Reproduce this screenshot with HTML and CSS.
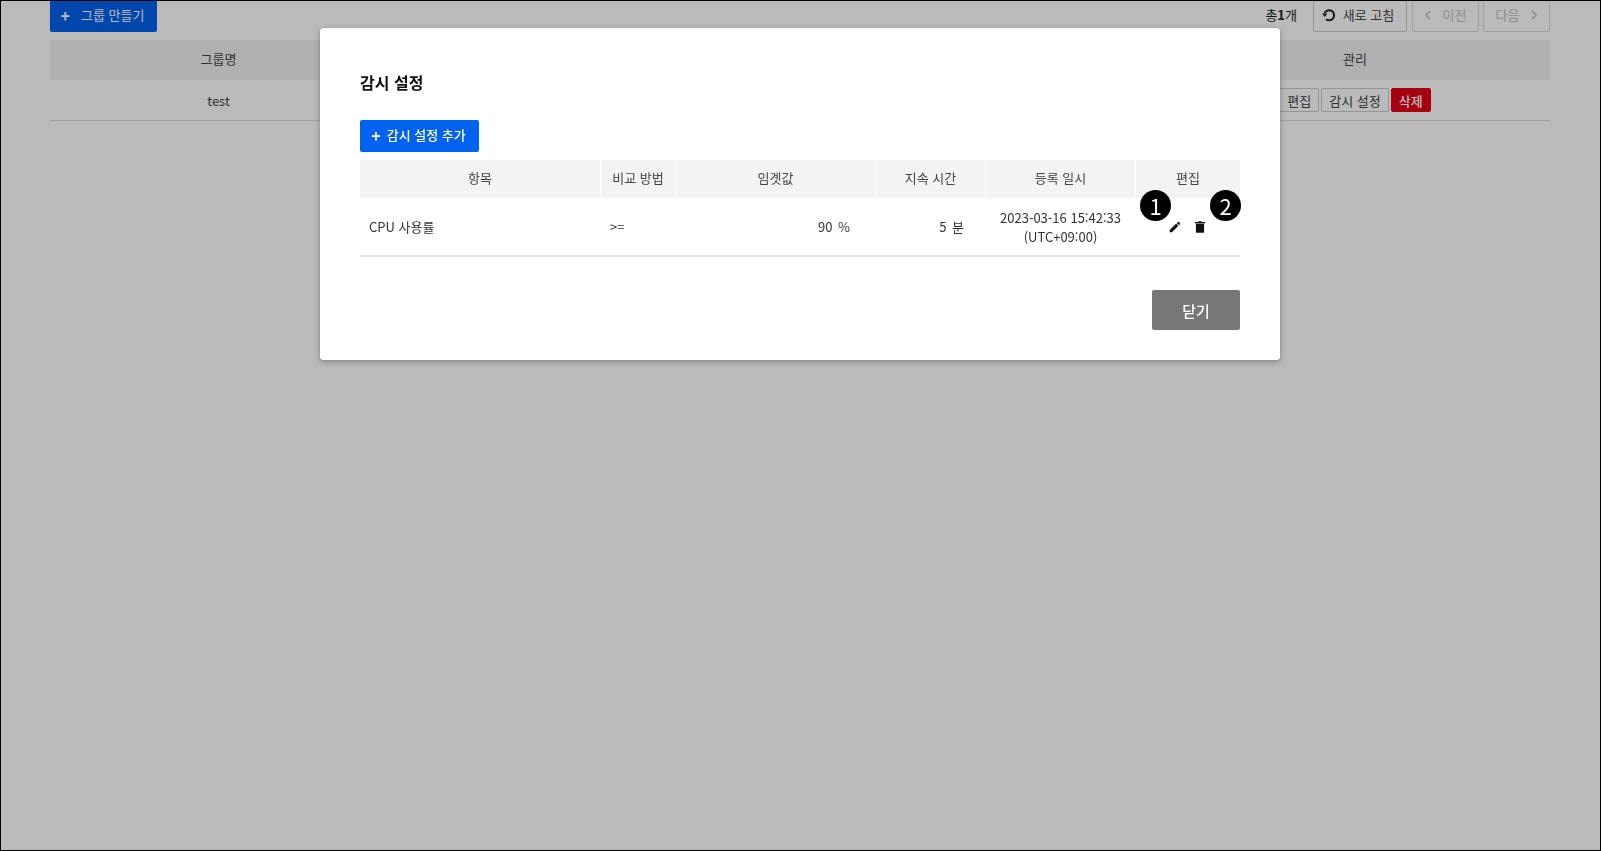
FILE: index.html
```html
<!DOCTYPE html>
<html lang="ko">
<head>
    <meta charset="UTF-8">
    <meta name="viewport" content="width=device-width, initial-scale=1.0">
    <title>감시 설정</title>
    <link rel="stylesheet" href="styles.css">
</head>
<body>

    <!-- Group list behind the dialog -->
    <main class="page">
        <div class="toolbar">
            <button class="btn btn-primary btn-create"><span class="plus">+</span>그룹 만들기</button>
            <div class="toolbar-right">
                <span class="count">총<b>1</b>개</span>
                <button class="btn btn-line btn-refresh">
                    <svg width="14" height="14" viewBox="0 0 14 14" class="refresh-icon"><path d="M2.6 5.2A5 5 0 1 1 4 11.2" fill="none" stroke="currentColor" stroke-width="2"/><path d="M0 5.4h5.4L2.7 9z" fill="currentColor"/></svg>
                    새로 고침
                </button>
                <button class="btn btn-line btn-page is-disabled">
                    <svg width="6" height="10" viewBox="0 0 6 10" class="chev"><path d="M5 1L1 5l4 4" fill="none" stroke="currentColor" stroke-width="1.6"/></svg>
                    이전
                </button>
                <button class="btn btn-line btn-page is-disabled">
                    다음
                    <svg width="6" height="10" viewBox="0 0 6 10" class="chev"><path d="M1 1l4 4-4 4" fill="none" stroke="currentColor" stroke-width="1.6"/></svg>
                </button>
            </div>
        </div>
        <div class="group-table">
            <div class="group-head">
                <div class="group-name">그룹명</div>
                <div class="group-rest"></div>
                <div class="group-manage">관리</div>
            </div>
            <div class="group-row">
                <div class="group-name">test</div>
                <div class="group-rest"></div>
                <div class="group-manage group-actions">
                    <button class="btn-small">편집</button>
                    <button class="btn-small">감시 설정</button>
                    <button class="btn-small btn-danger">삭제</button>
                </div>
            </div>
        </div>
    </main>

    <!-- Dialog -->
    <div class="overlay">
        <section class="modal">
            <h2 class="modal-title">감시 설정</h2>
            <button class="btn btn-primary btn-add"><span class="plus">+</span>감시 설정 추가</button>

            <div class="watch-table">
                <div class="watch-head">항목</div>
                <div class="watch-head">비교 방법</div>
                <div class="watch-head">임곗값</div>
                <div class="watch-head">지속 시간</div>
                <div class="watch-head">등록 일시</div>
                <div class="watch-head">편집</div>

                <div class="watch-cell cell-left">CPU 사용률</div>
                <div class="watch-cell cell-left cell-op">&gt;=</div>
                <div class="watch-cell cell-right cell-value">90 %</div>
                <div class="watch-cell cell-right cell-time">5 분</div>
                <div class="watch-cell cell-date">2023-03-16 15:42:33<br>(UTC+09:00)</div>
                <div class="watch-cell cell-edit">
                    <svg width="14" height="14" viewBox="0 0 24 24"><path fill="#111" d="M3 17.25V21h3.75L17.81 9.94l-3.75-3.75L3 17.25zM20.71 7.04a1 1 0 0 0 0-1.41l-2.34-2.34a1 1 0 0 0-1.41 0l-1.83 1.83 3.75 3.75 1.83-1.83z"/></svg>
                    <svg width="14" height="14" viewBox="0 0 24 24"><path fill="#111" d="M5 20a2 2 0 0 0 2 2h10a2 2 0 0 0 2-2V7H5v13zM20.5 3.5h-5l-1-1.5h-5l-1 1.5h-5V6h17V3.5z"/></svg>
                    <span class="marker marker-one">1</span>
                    <span class="marker marker-two">2</span>
                </div>
            </div>

            <div class="modal-foot">
                <button class="btn-close">닫기</button>
            </div>
        </section>
    </div>

</body>
</html>
```

FILE: styles.css
```css
/* Global Styles */
* {
    margin: 0;
    padding: 0;
    box-sizing: border-box;
}
html, body {
    height: 100%;
}
body {
    font-family: "Noto Sans CJK KR", "Noto Sans", sans-serif;
    font-size: 13px;
    color: #444;
    background: #fff;
    overflow: hidden;
}
button {
    font-family: inherit;
    cursor: pointer;
}

/* Buttons */
.btn {
    display: inline-flex;
    align-items: center;
    justify-content: center;
    height: 32px;
    padding-bottom: 3px;
    border-radius: 2px;
    font-size: 13px;
}
.btn-primary {
    background: #0062ee;
    border: 0;
    color: #fff;
    padding-right: 2px;
}
.plus {
    font-size: 16px;
    font-weight: 700;
    line-height: 1;
}
.btn-line {
    background: #fff;
    border: 1px solid #ccc;
    color: #444;
}

/* Page behind the dialog */
.page {
    padding: 0 51px 0 50px;
    height: 100%;
}
.toolbar {
    display: flex;
    justify-content: space-between;
    height: 40px;
}
.btn-create {
    width: 107px;
    gap: 11px;
}
.toolbar-right {
    display: flex;
    align-items: flex-start;
    gap: 4px;
}
.count {
    line-height: 30px;
    margin-right: 12px;
    color: #222;
}
.btn-refresh {
    width: 94px;
    gap: 7px;
    padding-right: 4px;
    margin-right: 1px;
}
.refresh-icon {
    color: #222;
}
.btn-page {
    width: 67px;
    gap: 12px;
}
.is-disabled {
    color: #c4c4c4;
    border-color: #ddd;
}
.group-head, .group-row {
    display: flex;
    align-items: center;
    text-align: center;
}
.group-head {
    height: 40px;
    padding-bottom: 3px;
    background: #f2f2f2;
}
.group-row {
    height: 41px;
    border-bottom: 1px solid #ddd;
}
.group-name {
    width: 337px;
}
.group-rest {
    flex: 1;
}
.group-manage {
    width: 390px;
}
.group-actions {
    display: flex;
    justify-content: center;
    gap: 2px;
}
.btn-small {
    height: 24px;
    padding: 0 7px;
    font-size: 13px;
    background: #fff;
    border: 1px solid #ccc;
    border-radius: 2px;
    color: #444;
}
.btn-danger {
    background: #e50016;
    border-color: #e50016;
    color: #fff;
    font-weight: 500;
}

/* Dialog */
.overlay {
    position: fixed;
    top: 0;
    left: 0;
    right: 0;
    bottom: 0;
    background: rgba(0, 0, 0, 0.27);
    border: 1px solid #000;
    padding: 27px 320px 0 319px;
}
.modal {
    width: 960px;
    height: 332px;
    padding: 40px;
    background: #fff;
    border-radius: 4px;
    box-shadow: 0 2px 6px rgba(0, 0, 0, 0.3);
}
.modal-title {
    font-size: 16px;
    font-weight: 700;
    line-height: 28px;
    color: #111;
    margin-bottom: 24px;
}
.btn-add {
    width: 119px;
    gap: 6px;
    margin-bottom: 8px;
    font-weight: 500;
}

/* Watch table */
.watch-table {
    display: grid;
    grid-template-columns: 240px 74px 199px 109px 149px 104px;
    column-gap: 1px;
    border-bottom: 2px solid #e6e6e6;
}
.watch-head {
    height: 38px;
    line-height: 36px;
    text-align: center;
    background: #f3f3f3;
    color: #444;
}
.watch-cell {
    height: 57px;
    display: flex;
    align-items: center;
    color: #333;
}
.cell-left {
    padding-left: 9px;
}
.cell-op {
    padding-left: 9px;
}
.cell-right {
    justify-content: flex-end;
    word-spacing: 2px;
}
.cell-value {
    padding-right: 25px;
}
.cell-time {
    padding-right: 21px;
}
.cell-date {
    text-align: center;
    justify-content: center;
    line-height: 19px;
}
.cell-edit {
    position: relative;
    justify-content: center;
    gap: 11px;
    padding-right: 2px;
}

/* Callout markers from the help page */
.marker {
    position: absolute;
    top: -8px;
    width: 31px;
    height: 31px;
    border-radius: 50%;
    background: #000;
    color: #fff;
    font-size: 22px;
    font-weight: 400;
    line-height: 31px;
    text-align: center;
}
.marker-one {
    left: 4px;
}
.marker-two {
    left: 74px;
}

.modal-foot {
    display: flex;
    justify-content: flex-end;
    margin-top: 33px;
}
.btn-close {
    width: 88px;
    height: 40px;
    background: #777;
    border: 0;
    border-radius: 2px;
    color: #fff;
    font-size: 15px;
    font-weight: 500;
}
```
